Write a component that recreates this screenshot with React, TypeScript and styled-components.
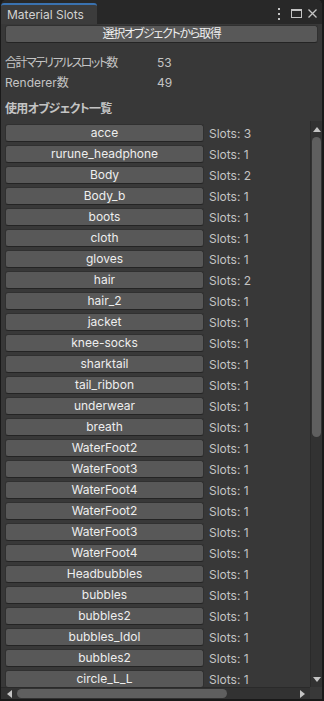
import React from "react";
import styled, { createGlobalStyle } from "styled-components";

const GlobalStyle = createGlobalStyle`
  html, body {
    margin: 0;
    padding: 0;
    background: #191919;
  }
  body {
    font-family: Inter, "Noto Sans CJK JP", sans-serif;
    font-size: 12px;
  }
`;

const Window = styled.div`
  box-sizing: border-box;
  width: 324px;
  height: 701px;
  display: flex;
  flex-direction: column;
  background: #383838;
  border: 1px solid #191919;
  border-top: none;
  border-right-width: 2px;
  border-bottom-width: 2px;
  border-radius: 6px 6px 0 0;
  overflow: hidden;
  color: #c4c4c4;
`;

const TabBar = styled.div`
  height: 24px;
  box-sizing: border-box;
  padding-top: 3px;
  display: flex;
  align-items: stretch;
  background: #282828;
`;

const Tab = styled.div`
  box-sizing: border-box;
  width: 96px;
  border-top: 2px solid #3a72b0;
  border-radius: 3px 3px 0 0;
  background: #3c3c3c;
  padding-left: 6px;
  line-height: 19px;
  color: #d2d2d2;
  font-size: 12px;
`;

const TabActions = styled.div`
  margin-left: auto;
  display: flex;
  align-items: center;
  gap: 6px;
  padding-right: 5px;

  svg {
    display: block;
  }
  svg:first-child {
    margin-right: 4px;
  }
`;

// Japanese text in the Unity UI is set tighter than Noto's full-width advance
const Jp = styled.span<{ $spacing: number }>`
  font-feature-settings: "palt" 1;
  letter-spacing: ${(p) => p.$spacing}px;
`;

const Top = styled.div`
  padding: 1px 4px 0 4px;
  display: flex;
  flex-direction: column;
`;

const WideButton = styled.div`
  box-sizing: border-box;
  height: 18px;
  border: 1px solid #303030;
  border-bottom-color: #242424;
  border-radius: 3px;
  background: #585858;
  color: #eeeeee;
  text-align: center;
  line-height: 16px;
  white-space: nowrap;
`;

const Stats = styled.div`
  margin-top: 10px;
`;

const StatRow = styled.div`
  display: grid;
  grid-template-columns: 152px 1fr;
  height: 20px;
  line-height: 20px;
`;

const SectionTitle = styled.div`
  margin-top: 6px;
  height: 20px;
  line-height: 20px;
  font-weight: 700;
  color: #c4c4c4;
`;

const ScrollView = styled.div`
  flex: 1;
  min-height: 0;
  margin-top: 2px;
  display: grid;
  grid-template-columns: 1fr 12px;
  grid-template-rows: 1fr 12px;
`;

const Viewport = styled.div`
  overflow: hidden;
  padding: 3px 0 0 4px;
`;

const Row = styled.div`
  display: flex;
  align-items: center;
  gap: 5px;
  height: 18px;
  margin-bottom: 3px;
`;

const ObjectButton = styled(WideButton)`
  width: 199px;
  flex: none;
`;

const SlotCount = styled.span`
  color: #c4c4c4;
  white-space: nowrap;
`;

const VBar = styled.div`
  display: grid;
  grid-template-rows: 16px 1fr 16px;
  background: #323232;
  border-left: 1px solid #2a2a2a;
  box-sizing: border-box;
`;

const Arrow = styled.div`
  display: flex;
  align-items: center;
  justify-content: center;

  svg {
    display: block;
  }
`;

const VTrack = styled.div`
  min-height: 0;
`;

const VThumb = styled.div<{ $top: number; $size: number }>`
  margin-top: ${(p) => p.$top}px;
  margin-left: 1px;
  width: 9px;
  height: ${(p) => p.$size}px;
  border-radius: 5px;
  background: #5f5f5f;
`;

const HBar = styled.div`
  display: flex;
  align-items: center;
  background: #323232;
  border-top: 1px solid #2a2a2a;
  box-sizing: border-box;
`;

const HArrow = styled(Arrow)`
  width: 16px;
  flex: none;
`;

const HTrack = styled.div`
  flex: 1;
  display: flex;
  align-items: center;
`;

const HThumb = styled.div<{ $size: number }>`
  width: ${(p) => p.$size}px;
  height: 9px;
  border-radius: 5px;
  background: #5f5f5f;
`;

const Corner = styled.div`
  background: #383838;
`;

const items: Array<[string, number]> = [
  ["acce", 3],
  ["rurune_headphone", 1],
  ["Body", 2],
  ["Body_b", 1],
  ["boots", 1],
  ["cloth", 1],
  ["gloves", 1],
  ["hair", 2],
  ["hair_2", 1],
  ["jacket", 1],
  ["knee-socks", 1],
  ["sharktail", 1],
  ["tail_ribbon", 1],
  ["underwear", 1],
  ["breath", 1],
  ["WaterFoot2", 1],
  ["WaterFoot3", 1],
  ["WaterFoot4", 1],
  ["WaterFoot2", 1],
  ["WaterFoot3", 1],
  ["WaterFoot4", 1],
  ["Headbubbles", 1],
  ["bubbles", 1],
  ["bubbles2", 1],
  ["bubbles_Idol", 1],
  ["bubbles2", 1],
  ["circle_L_L", 1],
];

const Triangle: React.FC<{ dir: "up" | "down" | "left" | "right" }> = ({ dir }) => {
  const pts = {
    up: "0,5 4,0 8,5",
    down: "0,0 8,0 4,5",
    left: "5,0 5,8 0,4",
    right: "0,0 0,8 5,4",
  }[dir];
  const vertical = dir === "up" || dir === "down";
  return (
    <svg width={vertical ? 8 : 5} height={vertical ? 5 : 8} viewBox={vertical ? "0 0 8 5" : "0 0 5 8"}>
      <polygon points={pts} fill="#c4c4c4" />
    </svg>
  );
};

export default function App() {
  return (
    <>
      <GlobalStyle />
      <Window>
        <TabBar>
          <Tab>Material Slots</Tab>
          <TabActions>
            <svg width="4" height="12" viewBox="0 0 4 12">
              <rect x="1" y="0" width="2" height="2" fill="#c4c4c4" />
              <rect x="1" y="5" width="2" height="2" fill="#c4c4c4" />
              <rect x="1" y="10" width="2" height="2" fill="#c4c4c4" />
            </svg>
            <svg width="11" height="9" viewBox="0 0 11 9">
              <rect x="0.5" y="0.5" width="10" height="8" fill="none" stroke="#c4c4c4" />
              <rect x="0" y="0" width="11" height="2" fill="#c4c4c4" />
            </svg>
            <svg width="9" height="9" viewBox="0 0 9 9">
              <path d="M0.5 0.5 L8.5 8.5 M8.5 0.5 L0.5 8.5" stroke="#c4c4c4" strokeWidth="1.3" />
            </svg>
          </TabActions>
        </TabBar>

        <Top>
          <WideButton>
            <Jp $spacing={-1.25}>選択オブジェクトから取得</Jp>
          </WideButton>
          <Stats>
            <StatRow>
              <Jp $spacing={-1.6}>合計マテリアルスロット数</Jp>
              <span>53</span>
            </StatRow>
            <StatRow>
              <span>Renderer数</span>
              <span>49</span>
            </StatRow>
          </Stats>
          <SectionTitle>
            <Jp $spacing={-0.7}>使用オブジェクト一覧</Jp>
          </SectionTitle>
        </Top>

        <ScrollView>
          <Viewport>
            {items.map(([name, slots], idx) => (
              <Row key={idx}>
                <ObjectButton>{name}</ObjectButton>
                <SlotCount>Slots: {slots}</SlotCount>
              </Row>
            ))}
          </Viewport>
          <VBar>
            <Arrow>
              <Triangle dir="up" />
            </Arrow>
            <VTrack>
              <VThumb $top={0} $size={300} />
            </VTrack>
            <Arrow>
              <Triangle dir="down" />
            </Arrow>
          </VBar>
          <HBar>
            <HArrow>
              <Triangle dir="left" />
            </HArrow>
            <HTrack>
              <HThumb $size={210} />
            </HTrack>
            <HArrow>
              <Triangle dir="right" />
            </HArrow>
          </HBar>
          <Corner />
        </ScrollView>
      </Window>
    </>
  );
}
